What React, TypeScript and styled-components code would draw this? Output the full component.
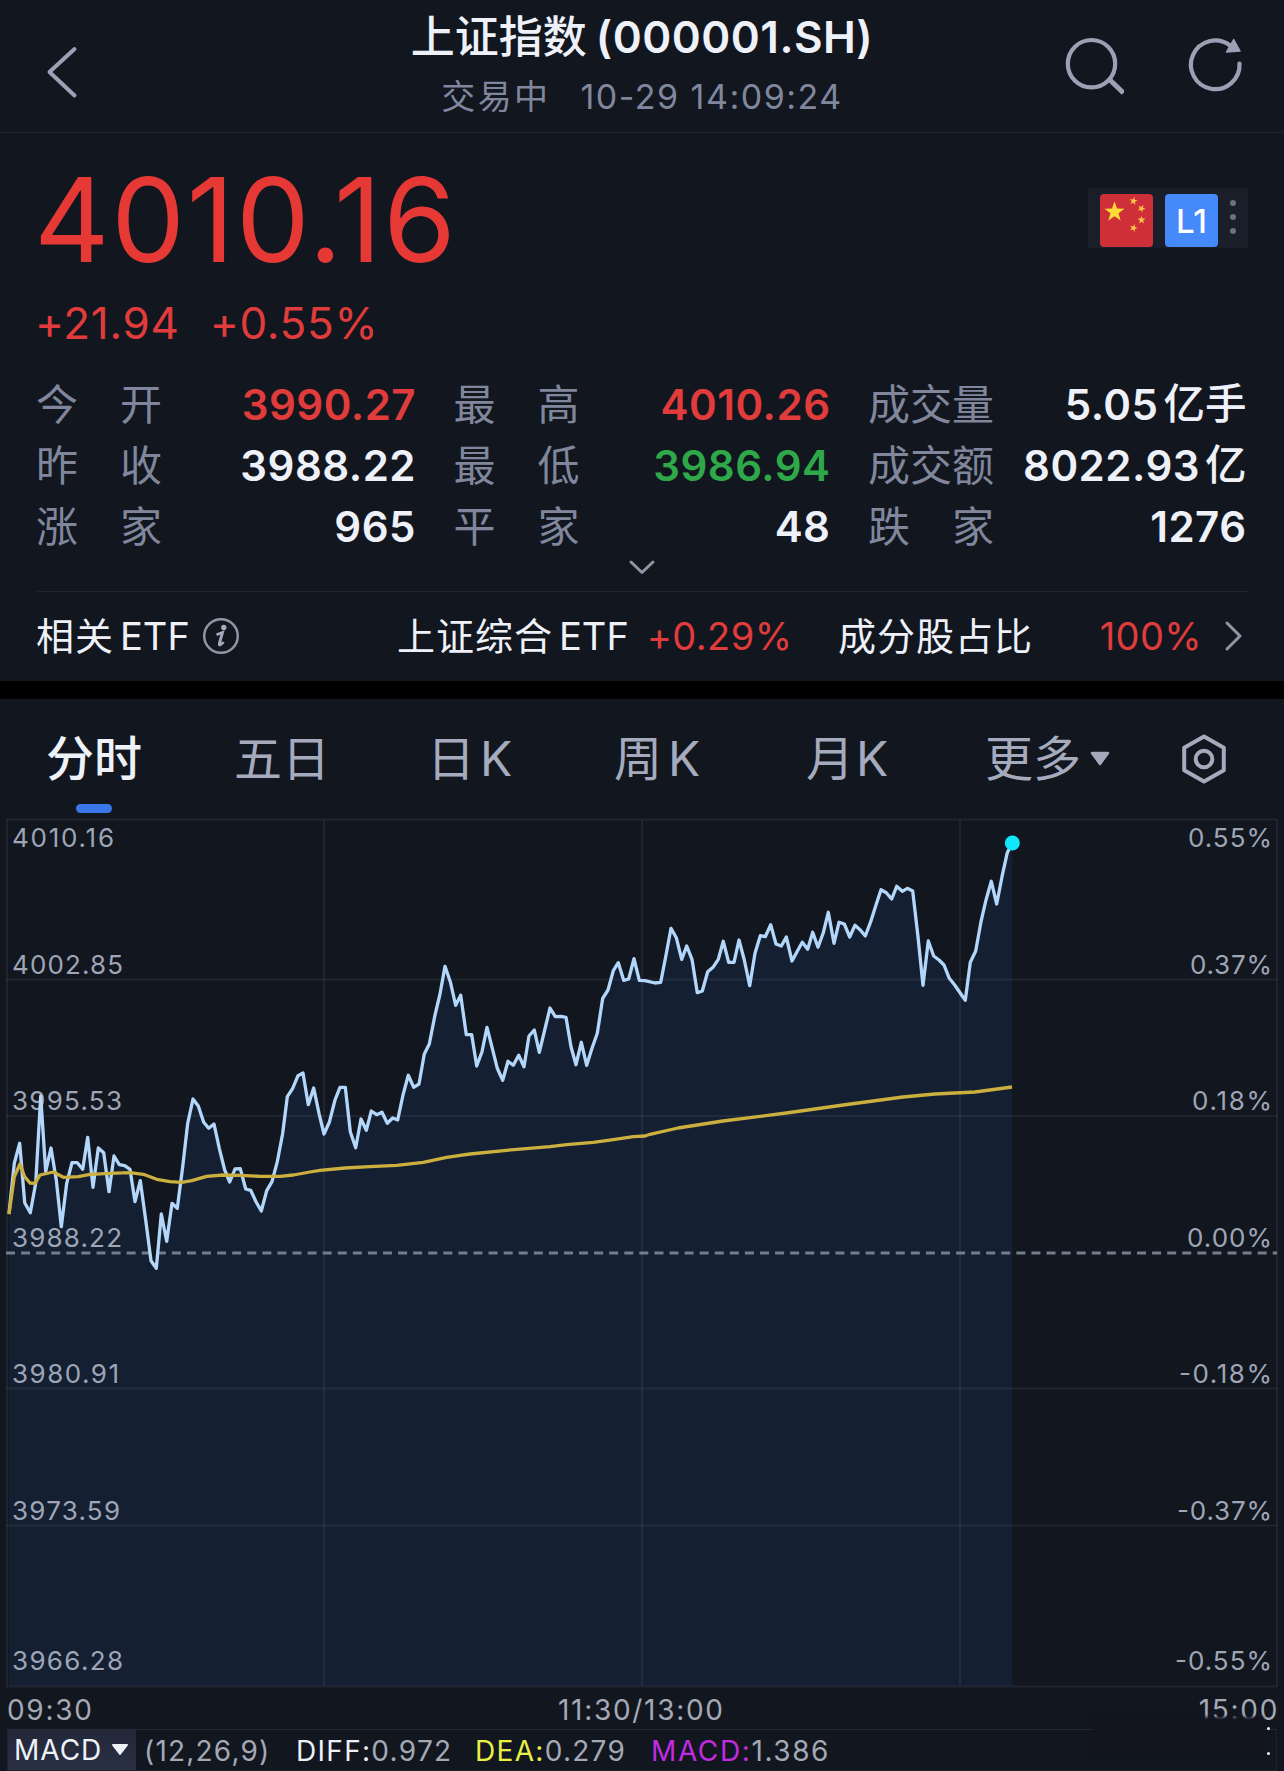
import React from "react";
import styled, { createGlobalStyle } from "styled-components";

const c = {
  bg: "#12161f",
  line: "#1e232f",
  muted: "#80879d",
  soft: "#a5abbd",
  text: "#eef1f8",
  up: "#e13c3c",
  down: "#2fa84a",
};

const GlobalStyle = createGlobalStyle`
  * { box-sizing: border-box; }
  body {
    margin: 0;
    background: ${c.bg};
    color: ${c.text};
    font-family: Inter, "Noto Sans CJK SC", sans-serif;
  }
`;

const Screen = styled.main`
  width: 1284px;
  height: 1771px;
  overflow: hidden;
  display: flex;
  flex-direction: column;
  white-space: nowrap;
`;

const Header = styled.header`
  height: 133px;
  flex: none;
  display: grid;
  grid-template-columns: 250px 1fr 250px;
  border-bottom: 1px solid ${c.line};
`;

const HeaderSide = styled.div<{ $end?: boolean }>`
  display: flex;
  justify-content: ${(p) => (p.$end ? "flex-end" : "flex-start")};
  padding: ${(p) => (p.$end ? "32px 36px 0 0" : "40px 0 0 40px")};
  gap: 60px;
`;

const TitleBlock = styled.div`
  display: flex;
  flex-direction: column;
  align-items: center;
  padding-top: 11px;
`;

const Title = styled.h1`
  margin: 0;
  font-size: 44px;
  line-height: 52px;
  font-weight: 600;
  letter-spacing: 0.5px;
`;

const TitleName = styled.span`
  font-weight: 500;
  letter-spacing: 0;
  margin-right: 9px;
`;

const Subtitle = styled.div`
  margin-top: 12px;
  display: flex;
  gap: 30px;
  font-size: 34px;
  line-height: 44px;
  letter-spacing: 1.5px;
  color: ${c.muted};
`;

const Status = styled.span`
  letter-spacing: 2.4px;
`;

const Quote = styled.section`
  height: 548px;
  flex: none;
  padding: 28px 36px 0;
`;

const PriceRow = styled.div`
  display: flex;
  justify-content: space-between;
  align-items: flex-start;
  height: 116px;
`;

const Price = styled.div`
  margin-left: -2px;
  font-size: 117px;
  line-height: 117px;
  color: #e63935;
  letter-spacing: 1.7px;
`;

const Badges = styled.div`
  display: flex;
  gap: 12px;
  width: 160px;
  height: 60px;
  margin-top: 27px;
  padding: 6px 0 0 12px;
  background: #191e29;
`;

const LevelBadge = styled.div`
  width: 53px;
  height: 53px;
  border-radius: 4px;
  background: #4589fb;
  color: #fff;
  font-size: 33px;
  line-height: 54px;
  font-weight: 500;
  text-align: center;
`;

const Dots = styled.div`
  display: flex;
  flex-direction: column;
  gap: 8px;
  padding-top: 6px;
`;

const Dot = styled.i`
  width: 6px;
  height: 6px;
  border-radius: 50%;
  background: #6c7080;
`;

const Change = styled.div`
  display: flex;
  gap: 30px;
  margin: 21px 0 0 -1px;
  font-size: 44px;
  line-height: 50px;
  letter-spacing: 0.7px;
  color: ${c.up};
`;

const Stats = styled.dl`
  margin: 26px 0 0;
  display: grid;
  grid-template-columns: 380px 377px 378.5px;
  column-gap: 37.5px;
  grid-auto-rows: 61px;
`;

const Stat = styled.div`
  display: flex;
  justify-content: space-between;
  line-height: 61px;
  font-size: 42px;
`;

const StatLabel = styled.dt`
  width: 126px;
  display: flex;
  justify-content: space-between;
  color: ${c.muted};
`;

const StatValue = styled.dd<{ $color?: string }>`
  margin: 0;
  display: flex;
  gap: 5px;
  font-weight: 600;
  letter-spacing: 0.5px;
  color: ${(p) => p.$color ?? c.text};
`;

const Unit = styled.span`
  font-weight: 500;
  font-size: 41.5px;
  letter-spacing: 0;
`;

const Expand = styled.div`
  height: 35px;
  display: flex;
  justify-content: center;
  border-bottom: 1px solid ${c.line};
`;

const EtfRow = styled.div`
  height: 88px;
  display: grid;
  grid-template-columns: 361px 441px 1fr auto 46px;
  align-items: center;
  font-size: 38px;
`;

const EtfItem = styled.div`
  display: flex;
  align-items: center;
`;

const InfoIcon = styled.svg`
  margin-left: 12px;
`;

const Cjk = styled.span<{ $gap?: number }>`
  margin-bottom: 5px;
  letter-spacing: 1px;
  margin-right: ${(p) => p.$gap ?? 0}px;
`;

const Rate = styled.span<{ $left?: number }>`
  color: ${c.up};
  letter-spacing: 0.4px;
  margin-left: ${(p) => p.$left ?? 0}px;
`;

const Arrow = styled.span`
  display: flex;
  justify-content: flex-end;
  padding-right: 5px;
`;

const Band = styled.div`
  height: 18px;
  flex: none;
  background: #000;
`;

const Tabs = styled.nav`
  height: 119px;
  flex: none;
  display: grid;
  grid-template-columns: 188px 193px 187px 192px 179px 196px 1fr;
  align-items: center;
  padding-left: 46px;
  font-size: 48px;
  color: ${c.soft};
`;

const Tab = styled.div<{ $active?: boolean; $gap?: number }>`
  position: relative;
  display: flex;
  align-items: center;
  justify-self: start;
  line-height: 119px;
  gap: ${(p) => p.$gap ?? 5}px;
  color: ${(p) => (p.$active ? c.text : "inherit")};
  font-weight: ${(p) => (p.$active ? 500 : 400)};
  &::after {
    content: "";
    display: ${(p) => (p.$active ? "block" : "none")};
    position: absolute;
    left: 30px;
    bottom: 5px;
    width: 36px;
    height: 9px;
    border-radius: 4.5px;
    background: #3a78ea;
  }
`;

const Chart = styled.svg`
  display: block;
  flex: none;
`;

const AxisText = styled.text`
  font-family: Inter, sans-serif;
  font-size: 26px;
  fill: #9ea5b6;
`;

const TimeAxis = styled.div`
  position: relative;
  height: 41px;
  flex: none;
  display: grid;
  grid-template-columns: 551px 1fr auto;
  padding: 2px 5px 0 7px;
  font-size: 28px;
  line-height: 40px;
  letter-spacing: 1.7px;
  color: #a4a9b5;
`;

const Smudge = styled.div`
  position: absolute;
  left: 1092px;
  top: 29px;
  width: 172px;
  height: 38px;
  background: #12151f;
  filter: blur(1.5px);
`;

const Speck = styled.i<{ $y: number }>`
  position: absolute;
  left: 1267px;
  top: ${(p) => p.$y}px;
  width: 3px;
  height: 3px;
  border-radius: 50%;
  background: #f2f2f2;
`;

const Indicator = styled.div`
  height: 42px;
  flex: none;
  margin: 0 7px;
  display: flex;
  border: 1px solid ${c.line};
  border-color: #262c36 ${c.line} ${c.line};
  font-size: 28px;
  line-height: 42px;
  color: #a4a9b5;
`;

const IndicatorName = styled.div`
  width: 128px;
  padding-left: 6px;
  display: flex;
  align-items: center;
  gap: 9px;
  letter-spacing: 1px;
  background: linear-gradient(#222838, #2a3044);
  color: ${c.text};
`;

const Params = styled.span`
  margin-left: 8px;
  width: 152px;
  letter-spacing: 1.2px;
`;

const Reading = styled.span<{ $w: number; $color: string; $track?: number }>`
  width: ${(p) => p.$w}px;
  letter-spacing: ${(p) => p.$track ?? 1.3}px;
  b {
    font-weight: 400;
    color: ${(p) => p.$color};
  }
`;

type Pt = [number, number];
const shift = (ox: number, oy: number, pts: Pt[]): Pt[] =>
  pts.map(([x, y]) => [ox + x / 3, oy + y / 3]);

const price: Pt[] = [
  ...shift(0, 1020, [
    [27, 580], [43, 430], [59, 370], [74, 548], [91, 578], [107, 490], [122, 228], [137, 455],
    [153, 384], [169, 480], [184, 620], [200, 490], [216, 428], [232, 428], [248, 448], [263, 352],
    [279, 502], [295, 384], [311, 398], [327, 515], [342, 408], [358, 434], [374, 437], [390, 448],
    [405, 545], [421, 482], [437, 600], [453, 722], [469, 745], [484, 582], [500, 664], [516, 550],
    [532, 565], [548, 440], [563, 310], [579, 237], [595, 258], [611, 307], [626, 325], [642, 312],
    [658, 385], [674, 450], [689, 486], [705, 447], [721, 446], [737, 507], [752, 511], [768, 545],
    [784, 573], [800, 512], [816, 485], [832, 425], [848, 340], [862, 230], [878, 205], [894, 167],
    [909, 159], [925, 254], [941, 204], [957, 280],
  ]),
  ...shift(320, 920, [
    [12, 642], [28, 607], [45, 540], [60, 502], [76, 502], [91, 635], [107, 683], [123, 597],
    [139, 631], [154, 573], [170, 584], [186, 577], [202, 610], [218, 594], [233, 600], [249, 525],
    [265, 466], [281, 502], [297, 492], [313, 402], [328, 372], [345, 285], [360, 222], [375, 139],
    [391, 185], [407, 256], [422, 226], [439, 344], [455, 344], [470, 438], [486, 395], [501, 322],
    [517, 385], [532, 445], [548, 481], [564, 424], [580, 436], [596, 406], [612, 440], [627, 348],
    [643, 330], [658, 397], [674, 330], [690, 264], [706, 290], [722, 289], [738, 292], [753, 380],
    [768, 434], [784, 367], [800, 436], [816, 385], [832, 340], [848, 235], [864, 210], [880, 152],
    [895, 128], [911, 181], [926, 177], [942, 116], [958, 181],
  ]),
  ...shift(640, 820, [
    [0, 481], [15, 482], [45, 489], [62, 487], [77, 410], [93, 325], [109, 353], [125, 418],
    [140, 378], [156, 418], [172, 518], [187, 513], [203, 455], [219, 442], [235, 418], [250, 364],
    [266, 427], [282, 427], [297, 360], [313, 420], [329, 497], [345, 400], [361, 347], [376, 350],
    [392, 314], [408, 372], [424, 378], [439, 351], [456, 423], [471, 395], [487, 367], [503, 388],
    [518, 337], [534, 382], [550, 338], [565, 277], [582, 370], [597, 307], [613, 312], [629, 351],
    [645, 316], [661, 330], [676, 348], [692, 305], [708, 255], [723, 209], [739, 218], [755, 237],
    [770, 199], [787, 214], [802, 205], [818, 213], [834, 350], [849, 496], [865, 363], [881, 408],
    [897, 420], [912, 435], [928, 475], [944, 495], [960, 518], [976, 541], [991, 427], [1007, 393],
    [1023, 305], [1038, 240], [1054, 184], [1070, 252], [1086, 170], [1102, 98], [1117, 69],
  ]),
];

const average: Pt[] = [
  ...shift(0, 1020, [
    [27, 583], [43, 470], [60, 432], [74, 470], [90, 489], [105, 490], [120, 465], [160, 456],
    [190, 472], [235, 470], [270, 463], [330, 460], [390, 458], [430, 463], [470, 478], [510, 485],
    [545, 487], [575, 482], [620, 469], [670, 465], [720, 466], [780, 469], [840, 469], [880, 465],
    [930, 456],
  ]),
  ...shift(320, 920, [
    [0, 751], [75, 744], [150, 740], [230, 736], [310, 727], [380, 712], [450, 702], [560, 691],
    [690, 680], [740, 674], [820, 667], [880, 659], [940, 650], [975, 648], [990, 643],
  ]),
  [678, 1128], [723, 1121], [790, 1112.5], [847, 1104.5], [903, 1097], [935, 1094], [975, 1092], [1012, 1087],
];

const toPoints = (pts: Pt[]) => pts.map(([x, y]) => `${x.toFixed(1)},${y.toFixed(1)}`).join(" ");

const axis: [string, string, number, number][] = [
  ["4010.16", "0.55%", 837.5, 99],
  ["4002.85", "0.37%", 964.5, 108],
  ["3995.53", "0.18%", 1100.5, 107],
  ["3988.22", "0.00%", 1237.5, 107],
  ["3980.91", "-0.18%", 1373.5, 104],
  ["3973.59", "-0.37%", 1510.5, 105],
  ["3966.28", "-0.55%", 1660.5, 108],
];

const rightWidth: Record<string, number> = {
  "0.55%": 82, "0.37%": 80, "0.18%": 78, "0.00%": 83, "-0.18%": 91, "-0.37%": 93, "-0.55%": 95,
};

const star = (cx: number, cy: number, r: number, rot = 0) =>
  Array.from({ length: 10 }, (_, i) => {
    const a = ((i * 36 - 90 + rot) * Math.PI) / 180;
    const k = i % 2 ? r * 0.4 : r;
    return `${(cx + k * Math.cos(a)).toFixed(1)},${(cy + k * Math.sin(a)).toFixed(1)}`;
  }).join(" ");

const Flag = () => (
  <svg width="53" height="53" viewBox="0 0 53 53">
    <rect width="53" height="53" rx="4" fill="#cf2f38" />
    <polygon points={star(14.5, 18, 10.5)} fill="#fddc35" />
    <polygon points={star(33.5, 7, 4.2, 10)} fill="#f8c445" />
    <polygon points={star(41.5, 14.5, 4.2, 25)} fill="#f8c445" />
    <polygon points={star(41.5, 26, 4.2, 0)} fill="#f8c445" />
    <polygon points={star(33.5, 34, 4.2, 20)} fill="#f8c445" />
  </svg>
);

interface StatItem {
  label: string;
  value: string;
  unit?: string;
  color?: string;
}

const stats: StatItem[] = [
  { label: "今开", value: "3990.27", color: c.up },
  { label: "最高", value: "4010.26", color: c.up },
  { label: "成交量", value: "5.05", unit: "亿手" },
  { label: "昨收", value: "3988.22" },
  { label: "最低", value: "3986.94", color: c.down },
  { label: "成交额", value: "8022.93", unit: "亿" },
  { label: "涨家", value: "965" },
  { label: "平家", value: "48" },
  { label: "跌家", value: "1276" },
];

export default function App() {
  const last = price[price.length - 1];
  return (
    <>
      <GlobalStyle />
      <Screen>
        <Header>
          <HeaderSide>
            <svg width="44" height="64" viewBox="40 40 44 64" fill="none" stroke="#9ba1b5" strokeWidth="4" strokeLinecap="round" strokeLinejoin="round">
              <path d="M74.5 49 49.5 72l25 23.500" />
            </svg>
          </HeaderSide>
          <TitleBlock>
            <Title>
              <TitleName>上证指数</TitleName>(000001.SH)
            </Title>
            <Subtitle>
              <Status>交易中</Status>
              <span>10-29 14:09:24</span>
            </Subtitle>
          </TitleBlock>
          <HeaderSide $end>
            <svg width="64" height="66" viewBox="1060 32 64 66" fill="none" stroke="#9ba1b5" strokeWidth="4.200">
              <circle cx="1091.500" cy="63.700" r="23.700" />
              <path d="M1109.500 79.500 1123.500 93" strokeWidth="5" />
            </svg>
            <svg width="64" height="66" viewBox="1184 32 64 66" fill="none" stroke="#9ba1b5" strokeWidth="4.200">
              <path d="M1239.500 63.500A24.300 24.300 0 1 1 1230 45.500" strokeLinecap="round" />
              <path d="M1233.700 39.500 1240 51 1226.500 52z" fill="#9ba1b5" strokeWidth="1.500" strokeLinejoin="round" />
            </svg>
          </HeaderSide>
        </Header>

        <Quote>
          <PriceRow>
            <Price>4010.16</Price>
            <Badges>
              <Flag />
              <LevelBadge>L1</LevelBadge>
              <Dots>
                <Dot />
                <Dot />
                <Dot />
              </Dots>
            </Badges>
          </PriceRow>
          <Change>
            <span>+21.94</span>
            <span>+0.55%</span>
          </Change>
          <Stats>
            {stats.map((s) => (
              <Stat key={s.label}>
                <StatLabel>
                  {[...s.label].map((ch) => (
                    <span key={ch}>{ch}</span>
                  ))}
                </StatLabel>
                <StatValue $color={s.color}>
                  {s.value}
                  {s.unit && <Unit>{s.unit}</Unit>}
                </StatValue>
              </Stat>
            ))}
          </Stats>
          <Expand>
            <svg width="30" height="22" viewBox="0 0 30 22" fill="none" stroke="#8f95a6" strokeWidth="3" strokeLinecap="round" strokeLinejoin="round">
              <path d="M4 5 15 15.500 26 5" />
            </svg>
          </Expand>
          <EtfRow>
            <EtfItem>
              <Cjk $gap={6}>相关</Cjk>ETF
              <InfoIcon width="38" height="38" viewBox="0 0 38 38">
                <circle cx="19" cy="19" r="16.800" fill="none" stroke="#8f95a6" strokeWidth="2.500" />
                <circle cx="21.800" cy="10.500" r="2.700" fill="#a5abbd" />
                <path d="M14.500 17.800q3.500-1.300 6-2.300l-3 10.500q-.7 2.600 1 1.700 1.500-.8 3-2.700" fill="none" stroke="#a5abbd" strokeWidth="2.800" />
              </InfoIcon>
            </EtfItem>
            <EtfItem>
              <Cjk $gap={6}>上证综合</Cjk>ETF
              <Rate $left={18}>+0.29%</Rate>
            </EtfItem>
            <Cjk>成分股占比</Cjk>
            <Rate>100%</Rate>
            <Arrow>
              <svg width="19" height="34" viewBox="0 0 19 34" fill="none" stroke="#8f95a6" strokeWidth="3" strokeLinecap="round" strokeLinejoin="round">
                <path d="M3 4 16 17 3 30" />
              </svg>
            </Arrow>
          </EtfRow>
        </Quote>

        <Band />

        <Tabs>
          <Tab $active>分时</Tab>
          <Tab>五日</Tab>
          <Tab>
            <span>日</span>K
          </Tab>
          <Tab $gap={6}>
            <span>周</span>K
          </Tab>
          <Tab $gap={2}>
            <span>月</span>K
          </Tab>
          <Tab $gap={9}>
            更多
            <svg width="20" height="16" viewBox="0 0 20 16">
              <path d="M2 2h16l-8 11z" fill={c.soft} stroke={c.soft} strokeWidth="2.500" strokeLinejoin="round" />
            </svg>
          </Tab>
          <svg width="46" height="52" viewBox="-23 -26 46 52" fill="none" stroke={c.soft} strokeWidth="4" strokeLinejoin="round">
            <path d="M0-22.500 19.800-11.200V11.200L0 22.500-19.800 11.200V-11.200z" />
            <circle r="8.300" />
          </svg>
        </Tabs>

        <Chart width="1284" height="870" viewBox="0 818 1284 870">
          <polygon points={`9,1686 ${toPoints(price)} ${last[0]},1686`} fill="#151f32" />
          <g stroke="#a8b6d8" strokeOpacity="0.090" strokeWidth="2">
            {[819.5, 979.5, 1116, 1388.5, 1525.5, 1686.5].map((y) => (
              <line key={y} x1="6" x2="1278" y1={y} y2={y} />
            ))}
            {[7, 324, 642, 960, 1277].map((x) => (
              <line key={x} x1={x} x2={x} y1="820" y2="1686" />
            ))}
          </g>
          {axis.map(([l, r, y, w]) => (
            <g key={l}>
              <AxisText x="12" y={y + 9.5} textLength={w + 3} lengthAdjust="spacing">{l}</AxisText>
              <AxisText x={1272 - rightWidth[r] - 2} y={y + 9.5} textLength={rightWidth[r] + 2} lengthAdjust="spacing">{r}</AxisText>
            </g>
          ))}
          <line x1="6" x2="1277" y1="1253" y2="1253" stroke="#747c90" strokeWidth="3" strokeDasharray="9 6.080" />
          <polyline points={toPoints(price)} fill="none" stroke="#b3d7fb" strokeWidth="3.300" strokeLinejoin="round" />
          <polyline points={toPoints(average)} fill="none" stroke="#cbb03f" strokeWidth="3.300" strokeLinejoin="round" />
          <circle cx={last[0]} cy={last[1]} r="7.500" fill="#12e6fb" />
        </Chart>

        <TimeAxis>
          <span>09:30</span>
          <span>11:30/13:00</span>
          <span>15:00</span>
          <Smudge />
          <Speck $y={39} />
          <Speck $y={64} />
        </TimeAxis>
        <Indicator>
          <IndicatorName>
            MACD
            <svg width="18" height="14" viewBox="0 0 18 14">
              <path d="M2 2h14l-7 9z" fill={c.text} stroke={c.text} strokeWidth="2" strokeLinejoin="round" />
            </svg>
          </IndicatorName>
          <Params>(12,26,9)</Params>
          <Reading $w={179} $color="#eef1f8"><b>DIFF:</b>0.972</Reading>
          <Reading $w={176} $color="#e9f046"><b>DEA:</b>0.279</Reading>
          <Reading $w={200} $color="#c22be0" $track={1.6}><b>MACD:</b>1.386</Reading>
        </Indicator>
      </Screen>
    </>
  );
}
